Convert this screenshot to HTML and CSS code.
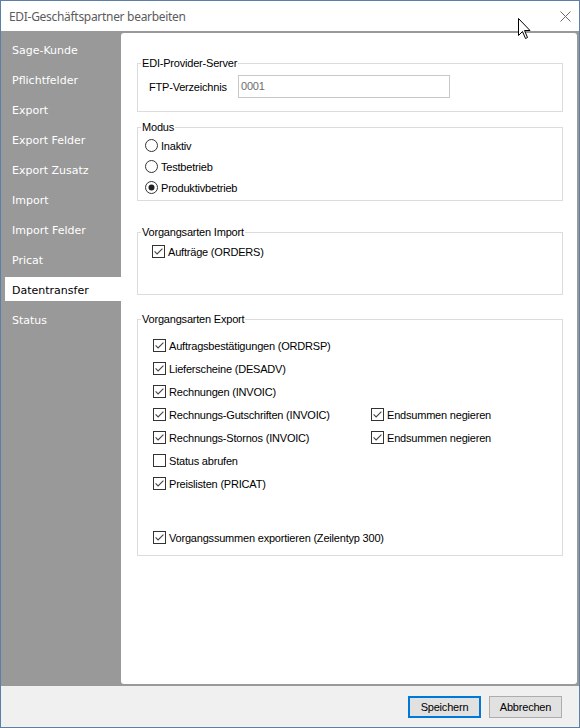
FILE: index.html
```html
<!DOCTYPE html>
<html lang="de">
<head>
<meta charset="utf-8">
<title>EDI-Geschäftspartner bearbeiten</title>
<link rel="stylesheet" href="styles.css">
</head>
<body>
<svg width="0" height="0" class="defs" aria-hidden="true">
  <defs>
    <symbol id="cb-on" viewBox="0 0 13 13">
      <rect x="0.5" y="0.5" width="12" height="12" fill="#fff" stroke="#333"/>
      <path d="M2.6 6.4 L5.1 8.9 L10.4 3.6" fill="none" stroke="#444" stroke-width="1.1"/>
    </symbol>
    <symbol id="cb-off" viewBox="0 0 13 13">
      <rect x="0.5" y="0.5" width="12" height="12" fill="#fff" stroke="#333"/>
    </symbol>
    <symbol id="rb-on" viewBox="0 0 13 13">
      <circle cx="6.5" cy="6.5" r="6" fill="#fff" stroke="#333"/>
      <circle cx="6.5" cy="6.5" r="3" fill="#222"/>
    </symbol>
    <symbol id="rb-off" viewBox="0 0 13 13">
      <circle cx="6.5" cy="6.5" r="6" fill="#fff" stroke="#333"/>
    </symbol>
  </defs>
</svg>
<div class="window">
  <div class="titlebar">
    <span class="title">EDI-Geschäftspartner bearbeiten</span>
    <svg class="close" viewBox="0 0 11 11"><path d="M0.5 0.5 L10.5 10.5 M10.5 0.5 L0.5 10.5" stroke="#6a6a6a" stroke-width="1" fill="none"/></svg>
  </div>
  <div class="main">
    <nav class="sidebar">
      <div class="nav-item">Sage-Kunde</div>
      <div class="nav-item">Pflichtfelder</div>
      <div class="nav-item">Export</div>
      <div class="nav-item">Export Felder</div>
      <div class="nav-item">Export Zusatz</div>
      <div class="nav-item">Import</div>
      <div class="nav-item">Import Felder</div>
      <div class="nav-item">Pricat</div>
      <div class="nav-item active">Datentransfer</div>
      <div class="nav-item">Status</div>
    </nav>
    <div class="panel">
      <fieldset class="group g-server">
        <legend>EDI-Provider-Server</legend>
        <div class="group-body">
          <div class="field-row">
            <span class="field-label">FTP-Verzeichnis</span>
            <div class="input">0001</div>
          </div>
        </div>
      </fieldset>

      <fieldset class="group g-modus">
        <legend>Modus</legend>
        <div class="group-body">
          <div class="opt radio-row"><svg class="rb"><use href="#rb-off"/></svg><span>Inaktiv</span></div>
          <div class="opt radio-row"><svg class="rb"><use href="#rb-off"/></svg><span>Testbetrieb</span></div>
          <div class="opt radio-row"><svg class="rb"><use href="#rb-on"/></svg><span>Produktivbetrieb</span></div>
        </div>
      </fieldset>

      <fieldset class="group g-import">
        <legend>Vorgangsarten Import</legend>
        <div class="group-body">
          <div class="opt check-row"><svg class="cb"><use href="#cb-on"/></svg><span>Aufträge (ORDERS)</span></div>
        </div>
      </fieldset>

      <fieldset class="group g-export">
        <legend>Vorgangsarten Export</legend>
        <div class="group-body">
          <div class="export-row"><div class="opt check-row col-left"><svg class="cb"><use href="#cb-on"/></svg><span>Auftragsbestätigungen (ORDRSP)</span></div></div>
          <div class="export-row"><div class="opt check-row col-left"><svg class="cb"><use href="#cb-on"/></svg><span>Lieferscheine (DESADV)</span></div></div>
          <div class="export-row"><div class="opt check-row col-left"><svg class="cb"><use href="#cb-on"/></svg><span>Rechnungen (INVOIC)</span></div></div>
          <div class="export-row">
            <div class="opt check-row col-left"><svg class="cb"><use href="#cb-on"/></svg><span>Rechnungs-Gutschriften (INVOIC)</span></div>
            <div class="opt check-row"><svg class="cb"><use href="#cb-on"/></svg><span>Endsummen negieren</span></div>
          </div>
          <div class="export-row">
            <div class="opt check-row col-left"><svg class="cb"><use href="#cb-on"/></svg><span>Rechnungs-Stornos (INVOIC)</span></div>
            <div class="opt check-row"><svg class="cb"><use href="#cb-on"/></svg><span>Endsummen negieren</span></div>
          </div>
          <div class="export-row"><div class="opt check-row col-left"><svg class="cb"><use href="#cb-off"/></svg><span>Status abrufen</span></div></div>
          <div class="export-row"><div class="opt check-row col-left"><svg class="cb"><use href="#cb-on"/></svg><span>Preislisten (PRICAT)</span></div></div>
          <div class="export-row summen"><div class="opt check-row"><svg class="cb"><use href="#cb-on"/></svg><span>Vorgangssummen exportieren (Zeilentyp 300)</span></div></div>
        </div>
      </fieldset>
    </div>
  </div>
  <div class="footer">
    <button class="btn primary">Speichern</button>
    <button class="btn">Abbrechen</button>
  </div>
  <svg class="cursor" viewBox="0 0 13 21"><path d="M0.5 0.5 L0.5 17.5 L4.5 13.5 L7.5 20.5 L9.5 19.5 L6.5 12.5 L12 12.5 Z" fill="#fff" stroke="#000" stroke-width="1" stroke-linejoin="miter"/></svg>
</div>
</body>
</html>
```

FILE: styles.css
```css
* { box-sizing: border-box; }
html, body { margin: 0; padding: 0; }
body {
  width: 580px;
  height: 728px;
  overflow: hidden;
  background: #fff;
  font-family: "Liberation Sans", Arial, sans-serif;
  font-size: 11px;
  letter-spacing: -0.2px;
  color: #000;
}
.defs { position: absolute; width: 0; height: 0; }

.window {
  position: relative;
  width: 580px;
  height: 728px;
  border: 1px solid #5b7fa6;
  display: flex;
  flex-direction: column;
}

.titlebar {
  height: 30px;
  flex: none;
  background: #fff;
  display: flex;
  align-items: center;
  justify-content: space-between;
  padding: 0 8px 0 8px;
}
.title {
  font-family: "Noto Sans", "Liberation Sans", sans-serif;
  font-size: 12px;
  letter-spacing: -0.3px;
  color: #5c5c5c;
}
.close { width: 11px; height: 11px; display: block; }

.main {
  flex: 1;
  min-height: 0;
  display: flex;
  background: #999999;
}
.sidebar {
  width: 120px;
  flex: none;
  padding-top: 6px;
  display: flex;
  flex-direction: column;
  gap: 6px;
}
.nav-item {
  margin-left: 4px;
  height: 24px;
  padding: 4px 0 0 7px;
  line-height: 20px;
  font-family: "DejaVu Sans", sans-serif;
  font-size: 11px;
  letter-spacing: 0;
  color: #fff;
}
.nav-item.active { background: #fff; color: #000; }

.panel {
  flex: 1;
  margin: 2px 2px 2px 0;
  background: #fff;
  border-radius: 3px;
  padding: 23px 14px 0 16px;
}

.group {
  margin: 0;
  padding: 0;
  border: 1px solid #dcdcdc;
  min-width: 0;
}
.group legend {
  margin-left: 3px;
  padding: 0 1px;
  height: 14px;
  line-height: 14px;
}
.g-modus { margin-top: 8px; }
.g-import { margin-top: 24px; }
.g-export { margin-top: 17px; }

.g-server .group-body { padding: 5px 0 13px 11px; }
.g-modus .group-body { padding: 1px 0 2px 7px; }
.g-import .group-body { padding: 2px 0 32px 14px; }
.g-export .group-body { padding: 8px 0 6px 15px; }

.field-row { display: flex; align-items: center; height: 23px; }
.field-label { width: 89px; flex: none; }
.input {
  width: 212px;
  height: 23px;
  border: 1px solid #c8c8c8;
  padding-left: 2px;
  line-height: 21px;
  color: #6d6d6d;
}

.opt { display: flex; align-items: center; gap: 3px; }
.radio-row { height: 21px; }
.check-row { height: 21px; }
.rb, .cb { width: 13px; height: 13px; flex: none; }

.export-row { display: flex; height: 23px; align-items: center; }
.export-row .col-left { width: 218px; flex: none; }
.export-row.summen { margin-top: 31px; }

.footer {
  height: 41px;
  flex: none;
  background: #f0f0f0;
  display: flex;
  justify-content: flex-end;
  align-items: flex-start;
  gap: 8px;
  padding: 10px 17px 0 0;
}
.btn {
  width: 73px;
  height: 22px;
  margin: 0;
  padding: 0;
  background: #e1e1e1;
  border: 1px solid #adadad;
  font-family: "Liberation Sans", Arial, sans-serif;
  font-size: 11px;
  letter-spacing: -0.2px;
  color: #000;
}
.btn.primary { border: 2px solid #0078d7; }

.cursor {
  position: absolute;
  left: 517px;
  top: 17px;
  width: 13px;
  height: 21px;
}
```
